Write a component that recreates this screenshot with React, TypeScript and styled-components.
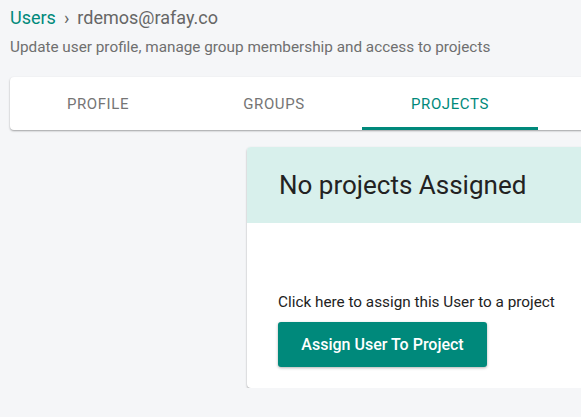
import { FC } from "react";
import styled, { createGlobalStyle } from "styled-components";

const GlobalStyle = createGlobalStyle`
  html, body {
    margin: 0;
    padding: 0;
    background: #f5f6f8;
    overflow: hidden;
  }
  body {
    font-family: Roboto, "Liberation Sans", sans-serif;
  }
`;

const Page = styled.div`
  width: 760px;
  padding: 8px 0 0 10px;
  box-sizing: border-box;
`;

const Breadcrumb = styled.div`
  display: flex;
  align-items: center;
  gap: 8px;
  font-size: 18px;
  line-height: 20px;
  color: #666;
`;

const CrumbLink = styled.span`
  color: #00897b;
`;

const Subtitle = styled.p`
  margin: 10px 0 0;
  font-size: 15.3px;
  line-height: 18px;
  color: #6f6f6f;
`;

const TabBar = styled.div`
  display: flex;
  margin-top: 21px;
  height: 53px;
  background: #fff;
  border-radius: 4px;
  box-shadow: 0 1px 2px rgba(0, 0, 0, 0.35);
`;

const Tab = styled.div<{ active?: boolean }>`
  width: 176px;
  display: flex;
  align-items: center;
  justify-content: center;
  font-size: 15px;
  letter-spacing: 0.6px;
  color: ${({ active }) => (active ? "#00897b" : "#757575")};
  box-sizing: border-box;
  border-bottom: 3px solid ${({ active }) => (active ? "#00897b" : "transparent")};
  padding-top: 3px;
`;

const Content = styled.div`
  display: grid;
  grid-template-columns: 237px 1fr;
  margin-top: 17px;
`;

const Card = styled.div`
  grid-column: 2;
  background: #fff;
  border-radius: 4px;
  box-shadow: 0 1px 2px rgba(0, 0, 0, 0.35);
  overflow: hidden;
`;

const CardHeader = styled.div`
  height: 76px;
  background: #d8f0ec;
  display: flex;
  align-items: center;
  padding-left: 32px;
  padding-bottom: 1px;
  box-sizing: border-box;
`;

const CardTitle = styled.h2`
  margin: 0;
  font-size: 26px;
  font-weight: 400;
  color: #222;
`;

const CardBody = styled.div`
  padding: 70px 31px 21px;
`;

const Hint = styled.p`
  margin: 0;
  font-size: 15.3px;
  line-height: 18px;
  color: #222;
`;

const PrimaryButton = styled.button`
  margin-top: 11px;
  width: 209px;
  height: 45px;
  border: none;
  border-radius: 3px;
  background: #00897b;
  color: #fff;
  font-family: inherit;
  font-size: 16px;
  font-weight: 500;
  box-shadow: 0 1px 3px rgba(0, 0, 0, 0.3);
  cursor: pointer;
`;

const tabs = ["PROFILE", "GROUPS", "PROJECTS"];

const App: FC = () => (
  <>
    <GlobalStyle />
    <Page>
      <Breadcrumb>
        <CrumbLink>Users</CrumbLink>
        <span>›</span>
        <span>rdemos@rafay.co</span>
      </Breadcrumb>
      <Subtitle>
        Update user profile, manage group membership and access to projects
      </Subtitle>
      <TabBar>
        {tabs.map((t) => (
          <Tab key={t} active={t === "PROJECTS"}>
            {t}
          </Tab>
        ))}
      </TabBar>
      <Content>
        <Card>
          <CardHeader>
            <CardTitle>No projects Assigned</CardTitle>
          </CardHeader>
          <CardBody>
            <Hint>Click here to assign this User to a project</Hint>
            <PrimaryButton>Assign User To Project</PrimaryButton>
          </CardBody>
        </Card>
      </Content>
    </Page>
  </>
);

export default App;
